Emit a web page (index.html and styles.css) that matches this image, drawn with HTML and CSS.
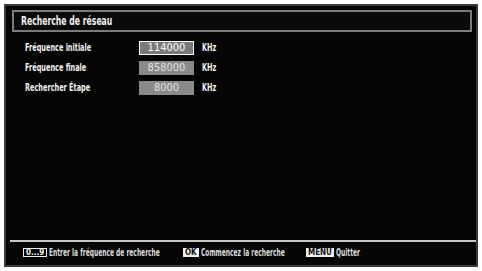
FILE: index.html
```html
<!DOCTYPE html>
<html lang="fr">
<head>
    <meta charset="UTF-8">
    <title>Recherche de réseau</title>
    <link rel="stylesheet" href="styles.css">
</head>
<body>
    <div class="screen">
        <div class="title-bar">
            <span class="narrow">Recherche de réseau</span>
        </div>

        <div class="settings">
            <div class="label"><span class="narrow">Fréquence initiale</span></div>
            <div class="value selected">114000</div>
            <div class="unit"><span class="narrow">KHz</span></div>

            <div class="label"><span class="narrow">Fréquence finale</span></div>
            <div class="value">858000</div>
            <div class="unit"><span class="narrow">KHz</span></div>

            <div class="label"><span class="narrow">Rechercher Étape</span></div>
            <div class="value">8000</div>
            <div class="unit"><span class="narrow">KHz</span></div>
        </div>

        <div class="spacer"></div>

        <div class="footer">
            <div class="hint hint-digits">
                <span class="key key-outline">0...9</span>
                <span class="narrow">Entrer la fréquence de recherche</span>
            </div>
            <div class="hint hint-ok">
                <span class="key">OK</span>
                <span class="narrow">Commencez la recherche</span>
            </div>
            <div class="hint hint-menu">
                <span class="key">MENU</span>
                <span class="narrow">Quitter</span>
            </div>
        </div>
    </div>
</body>
</html>
```

FILE: styles.css
```css
body {
    margin: 0;
    padding: 4px;
    background: #fff;
    font-family: "DejaVu Sans Condensed", "DejaVu Sans", sans-serif;
    font-weight: bold;
    color: #eee;
}

.screen {
    box-sizing: border-box;
    width: 474px;
    height: 263px;
    background: #050505;
    border: 2px solid #3a3a3a;
    display: flex;
    flex-direction: column;
}

/* squeezed text, like the TV menu font */
.narrow {
    display: inline-block;
    transform: scaleX(0.66);
    transform-origin: left center;
    white-space: nowrap;
}

.title-bar {
    box-sizing: border-box;
    height: 22px;
    margin: 4px 4px 0 6px;
    border: 2px solid #7c7c7c;
    background: #0a0a0a;
    padding-left: 7px;
    font-size: 13px;
    line-height: 18px;
    color: #f2f2f2;
}

.settings {
    display: grid;
    grid-template-columns: 106px 55px auto;
    column-gap: 8px;
    row-gap: 6px;
    margin: 9px 0 0 19px;
    font-size: 11px;
}

.label,
.unit {
    height: 14px;
    line-height: 14px;
    color: #f0f0f0;
}

.value {
    box-sizing: border-box;
    height: 14px;
    line-height: 14px;
    background: #8a8a8a;
    color: #e2e2e2;
    text-align: center;
    font-weight: normal;
    font-size: 11px;
}

.value.selected {
    border: 1px solid #fff;
    line-height: 12px;
    background: #7a7a7a;
    color: #fff;
}

.spacer {
    flex: 1;
}

.footer {
    display: flex;
    align-items: center;
    height: 18px;
    margin: 0 0 4px 4px;
    border-top: 2px solid #c8c8c8;
    padding-top: 1px;
    font-size: 10px;
    color: #dcdcdc;
}

.hint {
    display: flex;
    align-items: center;
    gap: 2px;
}

.hint-digits {
    margin-left: 13px;
    width: 160px;
}

.hint-ok {
    width: 123px;
}

.key {
    box-sizing: border-box;
    height: 9px;
    padding: 0 2px;
    background: #f2f2f2;
    color: #111;
    font-size: 8px;
    line-height: 9px;
}

.key-outline {
    width: 26px;
    border: 1px solid #f2f2f2;
    background: #050505;
    color: #f2f2f2;
    line-height: 7px;
    text-align: center;
}
```
